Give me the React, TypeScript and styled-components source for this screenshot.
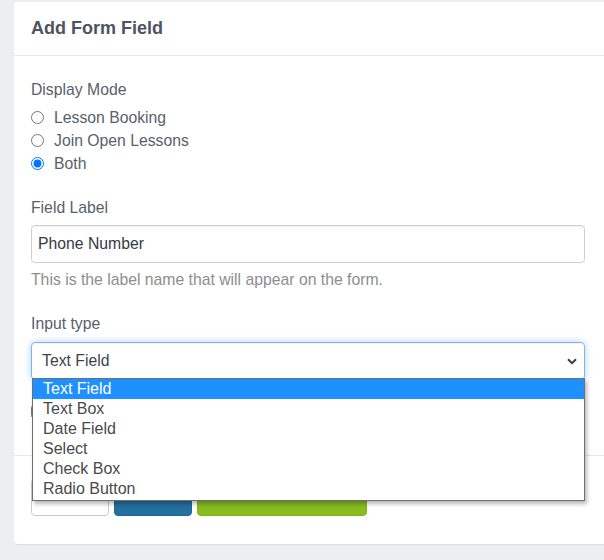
import React from "react";
import styled, { createGlobalStyle } from "styled-components";

const GlobalStyle = createGlobalStyle`
  html, body { margin: 0; padding: 0; background: #eceef1; overflow: hidden; }
  body {
    font-family: "Liberation Sans", Arial, Helvetica, sans-serif;
    font-size: 15.75px;
    color: #595f6b;
  }
  * { box-sizing: border-box; }
`;

const Page = styled.div`
  padding: 2px 0 16px 14px;
`;

const Card = styled.div`
  width: 620px;
  background: #fff;
  border-radius: 4px;
  box-shadow: 0 1px 1px rgba(0, 0, 0, 0.08);
`;

const Header = styled.div`
  height: 54px;
  padding: 0 17px 1px;
  display: flex;
  align-items: center;
  border-bottom: 1px solid #e6e8eb;
`;

const Title = styled.h2`
  margin: 0;
  font-size: 18px;
  font-weight: 700;
  color: #4e5462;
`;

const Body = styled.div`
  padding: 22px 17px 32px;
`;

const Content = styled.div`
  width: 554px;
  display: flex;
  flex-direction: column;
`;

const Group = styled.div<{ $mt?: number }>`
  display: flex;
  flex-direction: column;
  margin-top: ${(p) => p.$mt ?? 0}px;
`;

const Label = styled.div<{ $mb?: number }>`
  line-height: 24px;
  margin-bottom: ${(p) => p.$mb ?? 0}px;
`;

const RadioRow = styled.label`
  display: flex;
  align-items: center;
  height: 23px;
  line-height: 23px;
`;

const Radio = styled.input.attrs({ type: "radio" })`
  width: 13px;
  height: 13px;
  margin: 0 10px 0 0;
`;

const TextInput = styled.div`
  height: 38px;
  border: 1px solid #cfcfcf;
  border-radius: 4px;
  padding: 0 6px;
  display: flex;
  align-items: center;
  color: #343a44;
  box-shadow: inset 0 1px 1px rgba(0, 0, 0, 0.05);
`;

const Help = styled.div`
  margin-top: 5px;
  line-height: 24px;
  color: #8e8e8e;
`;

const SelectWrap = styled.div`
  position: relative;
`;

const SelectBox = styled.div`
  height: 38px;
  border: 1px solid #7fb5e3;
  border-radius: 4px;
  padding: 0 7px 0 10px;
  display: flex;
  align-items: center;
  justify-content: space-between;
  color: #3d434c;
  box-shadow: inset 0 1px 1px rgba(0, 0, 0, 0.06), 0 0 7px rgba(102, 175, 233, 0.55);
`;

const List = styled.ul`
  position: absolute;
  left: 1px;
  right: 0;
  top: 36px;
  margin: 0;
  padding: 0 0 1px;
  list-style: none;
  background: #fff;
  border: 1px solid #6f6f6f;
  box-shadow: 2px 3px 4px rgba(0, 0, 0, 0.28);
  z-index: 5;
  font-size: 16px;
`;

const Item = styled.li<{ $active?: boolean }>`
  height: 20px;
  line-height: 20px;
  padding-left: 10px;
  color: ${(p) => (p.$active ? "#fff" : "#4a4a4a")};
  background: ${(p) => (p.$active ? "#1e90ff" : "transparent")};
`;

const CheckRow = styled.div`
  display: flex;
  align-items: center;
  height: 23px;
  margin-top: 20px;
`;

const Check = styled.input.attrs({ type: "checkbox" })`
  width: 13px;
  height: 13px;
  margin: 0;
`;

const Footer = styled.div`
  border-top: 1px solid #e6e8eb;
  padding: 22px 17px 28px;
  display: flex;
  gap: 5px;
`;

const Button = styled.button<{ $variant: "default" | "primary" | "success"; $w: number }>`
  width: ${(p) => p.$w}px;
  height: 38px;
  border-radius: 4px;
  font: inherit;
  border: 1px solid
    ${(p) => (p.$variant === "default" ? "#cccccc" : p.$variant === "primary" ? "#1f6795" : "#80b41c")};
  background: ${(p) => (p.$variant === "default" ? "#fff" : p.$variant === "primary" ? "#236f9f" : "#88bc1f")};
`;

const options = ["Text Field", "Text Box", "Date Field", "Select", "Check Box", "Radio Button"];

export default function App() {
  return (
    <>
      <GlobalStyle />
      <Page>
        <Card>
          <Header>
            <Title>Add Form Field</Title>
          </Header>
          <Body>
            <Content>
              <Group>
                <Label $mb={4}>Display Mode</Label>
                <RadioRow>
                  <Radio name="mode" />
                  Lesson Booking
                </RadioRow>
                <RadioRow>
                  <Radio name="mode" />
                  Join Open Lessons
                </RadioRow>
                <RadioRow>
                  <Radio name="mode" defaultChecked />
                  Both
                </RadioRow>
              </Group>
              <Group $mt={21}>
                <Label $mb={5}>Field Label</Label>
                <TextInput>Phone Number</TextInput>
                <Help>This is the label name that will appear on the form.</Help>
              </Group>
              <Group $mt={20}>
                <Label $mb={6}>Input type</Label>
                <SelectWrap>
                  <SelectBox>
                    <span>Text Field</span>
                    <svg width="10" height="7" viewBox="0 0 10 7">
                      <path d="M1 1.2 L5 5.2 L9 1.2" fill="none" stroke="#3a3a3a" strokeWidth="2" />
                    </svg>
                  </SelectBox>
                  <List>
                    {options.map((o, i) => (
                      <Item key={o} $active={i === 0}>
                        {o}
                      </Item>
                    ))}
                  </List>
                </SelectWrap>
              </Group>
              <CheckRow>
                <Check aria-label="Required" />
              </CheckRow>
            </Content>
          </Body>
          <Footer>
            <Button $variant="default" $w={78} aria-label="Cancel" />
            <Button $variant="primary" $w={78} aria-label="Save" />
            <Button $variant="success" $w={170} aria-label="Save and add another" />
          </Footer>
        </Card>
      </Page>
    </>
  );
}
